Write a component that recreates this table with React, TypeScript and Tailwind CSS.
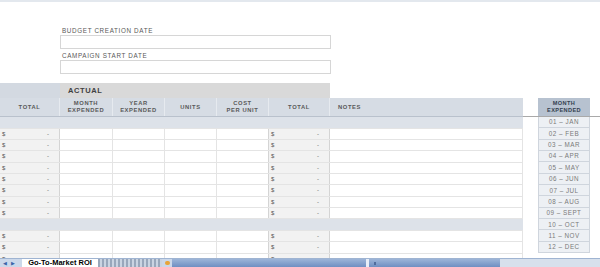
import React from "react";

const cols = [
  { w: 60, label: ["TOTAL"] },
  { w: 53, label: ["MONTH", "EXPENDED"] },
  { w: 52, label: ["YEAR", "EXPENDED"] },
  { w: 52, label: ["UNITS"] },
  { w: 52, label: ["COST", "PER UNIT"] },
  { w: 61, label: ["TOTAL"] },
  { w: 193, label: ["NOTES"], left: true },
];

const months = [
  "01 – JAN",
  "02 – FEB",
  "03 – MAR",
  "04 – APR",
  "05 – MAY",
  "06 – JUN",
  "07 – JUL",
  "08 – AUG",
  "09 – SEPT",
  "10 – OCT",
  "11 – NOV",
  "12 – DEC",
];

function MoneyCell({ w }: { w: number }) {
  return (
    <div
      className="h-full flex items-center justify-between px-[2px] bg-[#f2f2f2] border-r border-[#d4d4d4] text-[6px] leading-none text-[#595959] box-border"
      style={{ width: w }}
    >
      <span>$</span>
      <span className="pr-[8px]">-</span>
    </div>
  );
}

function DataRow() {
  return (
    <div className="flex h-[11.35px] border-b border-[#e4e4e4] box-border">
      <MoneyCell w={60} />
      <div className="w-[53px] h-full border-r border-[#e4e4e4]" />
      <div className="w-[52px] h-full border-r border-[#e4e4e4]" />
      <div className="w-[52px] h-full border-r border-[#e4e4e4]" />
      <div className="w-[52px] h-full border-r border-[#d4d4d4]" />
      <MoneyCell w={61} />
      <div className="w-[193px] h-full border-r border-[#e4e4e4]" />
    </div>
  );
}

function Band() {
  return <div className="h-[11.6px] bg-[#dde2e9] border-b border-[#e4e4e4] box-border w-[523px]" />;
}

export default function App() {
  return (
    <div className="w-[600px] h-[267px] overflow-hidden flex flex-col bg-white font-['Liberation_Sans',Arial,sans-serif]">
      <div className="h-[2px] bg-[#e3e8ee] shrink-0" />
      <div className="flex-1 overflow-hidden">
        <div className="pl-[60px] pt-[25px] w-[331px]">
          <div className="h-[8px] leading-[8px] text-[6.3px] text-[#595959] pl-[2px] tracking-[0.65px]">
            BUDGET CREATION DATE
          </div>
          <div className="h-[14px] border border-[#d6d6d6] bg-white" />
          <div className="h-[3px]" />
          <div className="h-[8px] leading-[8px] text-[6.3px] text-[#595959] pl-[2px] tracking-[0.65px]">
            CAMPAIGN START DATE
          </div>
          <div className="h-[14px] border border-[#d6d6d6] bg-white" />
        </div>
        <div className="flex mt-[9px]">
          <div className="w-[523px] shrink-0">
            <div className="flex h-[15px]">
              <div className="w-[60px] bg-[#d3d9e1]" />
              <div className="w-[270px] bg-[#d9d9d9] flex items-center pl-[8px] text-[7.5px] font-bold text-[#404040] tracking-[0.6px]">
                ACTUAL
              </div>
            </div>
            <div className="flex h-[19px] bg-[#d6dce4] border-b border-[#b9c1cc] box-border">
              {cols.map((c, i) => (
                <div
                  key={i}
                  className={`h-full flex flex-col justify-center text-[5.8px] leading-[7px] font-bold text-[#595959] tracking-[0.6px] ${
                    c.left ? "items-start pl-[8px]" : "items-center"
                  } ${i < cols.length - 1 ? "border-r border-[#e6eaef]" : ""}`}
                  style={{ width: c.w }}
                >
                  {c.label.map((l) => (
                    <span key={l}>{l}</span>
                  ))}
                </div>
              ))}
            </div>
            <Band />
            {Array.from({ length: 8 }).map((_, i) => (
              <DataRow key={i} />
            ))}
            <Band />
            {Array.from({ length: 3 }).map((_, i) => (
              <DataRow key={"b" + i} />
            ))}
          </div>
          <div className="w-[77px] shrink-0">
            <div className="h-[15px]" />
            <div className="h-[19px] border-b border-[#a9a9a9] box-border">
              <div className="ml-[15px] w-[52px] h-full bg-[#b7c2d0] flex flex-col items-center justify-center text-[5.6px] leading-[7px] font-bold text-[#333f4f] tracking-[0.4px]">
                <span>MONTH</span>
                <span>EXPENDED</span>
              </div>
            </div>
            <div className="ml-[15px] w-[52px]">
              {months.map((m) => (
                <div
                  key={m}
                  className="h-[11.35px] bg-[#edf0f4] border-b border-x border-[#cfd5dd] box-border flex items-center justify-center text-[6.3px] text-[#7a7a7a] tracking-[0.5px]"
                >
                  {m}
                </div>
              ))}
            </div>
          </div>
        </div>
      </div>
      <div className="h-[9px] shrink-0 flex items-stretch bg-[#cbd8ea] border-t border-[#9fb4d2]">
        <div className="w-[22px] flex items-center gap-[4px] pl-[3px] text-[5px] leading-none text-[#3a64a8]">
          <span>◀</span>
          <span>▶</span>
        </div>
        <div className="w-[76px] bg-white flex items-center justify-center text-[7.5px] font-bold text-black leading-none">
          Go-To-Market ROI
        </div>
        <div className="w-[64px] bg-[repeating-linear-gradient(90deg,#8c9bb0_0px,#8c9bb0_2px,#c9d3e0_2px,#c9d3e0_4px)] opacity-80" />
        <div className="w-[10px] flex items-center justify-center">
          <div className="w-[5px] h-[4px] bg-[#e7a43a] rounded-sm" />
        </div>
        <div className="w-[194px] bg-gradient-to-b from-[#9db5d8] to-[#6f8fc2]" />
        <div className="w-[3px] bg-[#e8eef7]" />
        <div className="w-[131px] bg-gradient-to-b from-[#9db5d8] to-[#6f8fc2] flex items-center pl-[5px]">
          <div className="w-[2px] h-[3px] bg-[#506c9c]" />
        </div>
        <div className="flex-1 bg-[#d7e0ec]" />
      </div>
    </div>
  );
}
